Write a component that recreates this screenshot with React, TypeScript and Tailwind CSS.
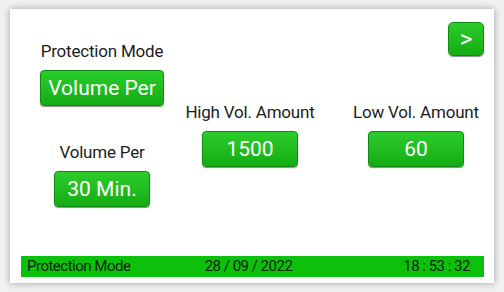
import React from 'react';

const GreenButton: React.FC<{ label: string; className?: string }> = ({ label, className = '' }) => (
  <button
    className={`h-[36px] rounded-[4px] border border-[#118a11] bg-gradient-to-b from-[#2bcc2b] to-[#14ad14] text-white text-[21px] leading-none shadow-[0_1px_1px_rgba(0,0,0,0.45)] flex items-center justify-center ${className}`}
  >
    {label}
  </button>
);

const App: React.FC = () => {
  return (
    <div className="w-[504px] h-[292px] bg-[#f1f1f1] pt-[9px] pl-[10px]" style={{ fontFamily: 'Roboto, "Liberation Sans", sans-serif' }}>
      <div className="w-[484px] h-[274px] bg-white shadow-[0_0_7px_rgba(0,0,0,0.35)] flex flex-col">
        {/* Settings columns */}
        <div className="flex pl-[20px]">
          <div className="w-[144px] flex flex-col items-center pt-[32px]">
            <span className="text-[17px] leading-[20px] tracking-[-0.2px] text-[#1c1c1c]">Protection Mode</span>
            <GreenButton label="Volume Per" className="w-[124px] mt-[9px]" />
            <span className="text-[17px] leading-[20px] tracking-[-0.2px] text-[#1c1c1c] mt-[36px]">Volume Per</span>
            <GreenButton label="30 Min." className="w-[96px] mt-[9px]" />
          </div>

          <div className="w-[140px] ml-[6px] flex flex-col items-center pt-[93px]">
            <span className="text-[17px] leading-[20px] tracking-[-0.2px] text-[#1c1c1c] whitespace-nowrap">High Vol. Amount</span>
            <GreenButton label="1500" className="w-[96px] mt-[9px]" />
          </div>

          <div className="w-[140px] ml-[26px] flex flex-col items-center pt-[13px]">
            <button className="self-end mr-[2px] w-[36px] h-[34px] rounded-[5px] border border-[#118a11] bg-gradient-to-b from-[#2bcc2b] to-[#14ad14] text-white text-[24px] leading-none shadow-[0_1px_1px_rgba(0,0,0,0.45)] flex items-center justify-center">
              &gt;
            </button>
            <span className="text-[17px] leading-[20px] tracking-[-0.2px] text-[#1c1c1c] mt-[46px] whitespace-nowrap">Low Vol. Amount</span>
            <GreenButton label="60" className="w-[96px] mt-[9px]" />
          </div>
        </div>

        {/* Status bar */}
        <div className="mt-auto mb-[6px] ml-[11px] mr-[10px] h-[21px] bg-[#0cc10c] flex items-center justify-between pl-[6px] pr-[14px] text-[15px] tracking-[-0.5px] text-[#092409]">
          <span className="w-[150px]">Protection Mode</span>
          <span>28 / 09 / 2022</span>
          <span className="w-[150px] text-right">18 : 53 : 32</span>
        </div>
      </div>
    </div>
  );
};

export default App;
